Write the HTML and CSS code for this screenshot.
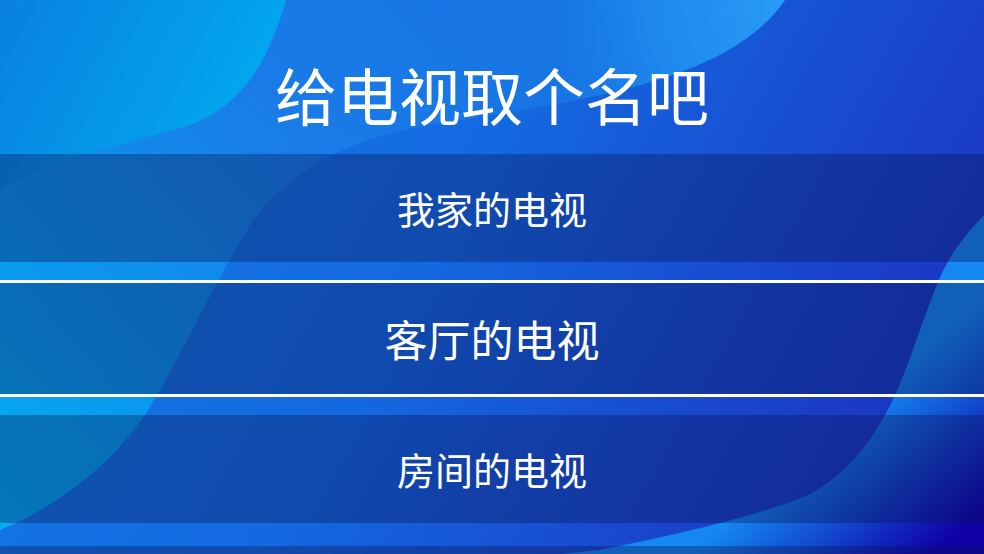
FILE: index.html
```html
<!DOCTYPE html>
<html lang="zh-CN">
<head>
<meta charset="utf-8">
<title>给电视取个名吧</title>
<link rel="stylesheet" href="styles.css">
</head>
<body>
<svg class="bg" viewBox="0 0 984 554" preserveAspectRatio="none" aria-hidden="true">
  <defs>
    <linearGradient id="base" x1="0" y1="0" x2="984" y2="554" gradientUnits="userSpaceOnUse">
      <stop offset="0" stop-color="#1380e6"/>
      <stop offset="0.45" stop-color="#1468e0"/>
      <stop offset="0.8" stop-color="#1a3ec8"/>
      <stop offset="1" stop-color="#1a2cc0"/>
    </linearGradient>
    <linearGradient id="ribbon" x1="600" y1="0" x2="0" y2="530" gradientUnits="userSpaceOnUse">
      <stop offset="0" stop-color="#1572e2"/>
      <stop offset="0.4" stop-color="#1a7ce8"/>
      <stop offset="0.7" stop-color="#0c94ec"/>
      <stop offset="1" stop-color="#02aef2"/>
    </linearGradient>
    <radialGradient id="glow" cx="790" cy="0" r="260" gradientUnits="userSpaceOnUse">
      <stop offset="0" stop-color="#2a9cf6" stop-opacity="1"/>
      <stop offset="0.55" stop-color="#2292f2" stop-opacity="0.7"/>
      <stop offset="1" stop-color="#1a80ea" stop-opacity="0"/>
    </radialGradient>
    <linearGradient id="cyan" x1="0" y1="0" x2="240" y2="130" gradientUnits="userSpaceOnUse">
      <stop offset="0" stop-color="#0880e0"/>
      <stop offset="1" stop-color="#02a8ee"/>
    </linearGradient>
    <linearGradient id="right" x1="880" y1="390" x2="984" y2="510" gradientUnits="userSpaceOnUse">
      <stop offset="0" stop-color="#1488f0"/>
      <stop offset="1" stop-color="#1000a8"/>
    </linearGradient>
  </defs>
  <rect x="0" y="0" width="984" height="554" fill="url(#base)"/>
  <path d="M785 0 C730 80 590 100 430 125 C340 140 285 175 250 225 C210 290 180 360 145 415 C110 465 60 505 0 530 L0 0 Z" fill="url(#ribbon)"/>
  <path d="M785 0 C730 80 590 100 430 125 C340 140 285 175 250 225 C210 290 180 360 145 415 C110 465 60 505 0 530 L0 0 Z" fill="url(#glow)"/>
  <path d="M0 0 L286 0 C266 70 236 112 180 128 C120 145 50 160 0 190 Z" fill="url(#cyan)"/>
  <path d="M984 215 C960 240 945 262 935 290 C915 340 905 380 885 415 C865 450 845 475 810 494 C770 512 700 530 600 550 L560 554 L984 554 Z" fill="url(#right)"/>
</svg>

<main class="page">
  <h1 class="title">给电视取个名吧</h1>
  <ul class="names">
    <li class="name">我家的电视</li>
    <li class="name name-focused">客厅的电视</li>
    <li class="name">房间的电视</li>
    <li class="name" aria-hidden="true"></li>
  </ul>
</main>
</body>
</html>
```

FILE: styles.css
```css
html, body {
  margin: 0;
  padding: 0;
  width: 984px;
  height: 554px;
  overflow: hidden;
}

body {
  position: relative;
  font-family: "Noto Sans CJK SC", "Noto Sans", sans-serif;
  color: #ffffff;
  background: #1468e0;
}

.bg {
  position: absolute;
  left: 0;
  top: 0;
  width: 984px;
  height: 554px;
  z-index: 0;
}

.page {
  position: relative;
  z-index: 1;
  display: flex;
  flex-direction: column;
}

.title {
  margin: 0;
  height: 154px;
  box-sizing: border-box;
  padding-top: 34px;
  display: flex;
  align-items: center;
  justify-content: center;
  font-size: 62px;
  font-weight: 400;
  line-height: 1;
  letter-spacing: 0;
}

.names {
  list-style: none;
  margin: 0;
  padding: 0;
  display: flex;
  flex-direction: column;
  gap: 22.5px;
}

.name {
  flex: none;
  height: 108px;
  box-sizing: border-box;
  display: flex;
  align-items: center;
  justify-content: center;
  background: rgba(10, 20, 80, 0.35);
  font-size: 38px;
  line-height: 1;
}

.name-focused {
  height: 117px;
  margin: -4.5px 0;
  border-top: 3px solid #ffffff;
  border-bottom: 3px solid #ffffff;
  font-size: 43px;
}
```
